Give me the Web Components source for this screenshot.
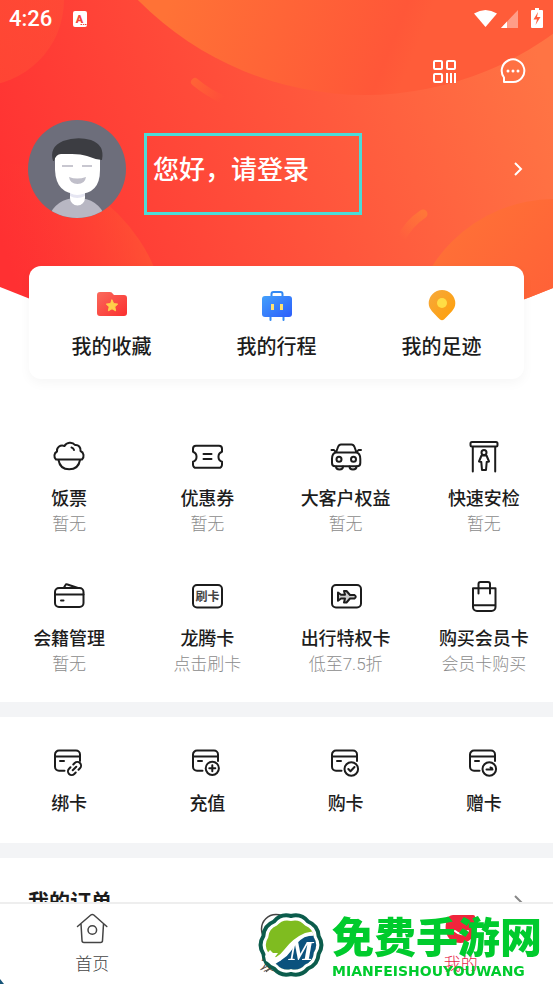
<!DOCTYPE html>
<html lang="zh-CN">
<head>
<meta charset="utf-8">
<meta name="viewport" content="width=device-width, initial-scale=1">
<title>我的</title>
<style>
    body {
        margin: 0;
        background: #fff;
        color: #1c1c1c;
        font-family: Roboto, "Noto Sans CJK SC", sans-serif;
    }
</style>
</head>
<body>
<app-shell>
    <profile-hero>
        <status-bar slot="status" time="4:26"></status-bar>
        <quick-card>
            <menu-item size="large" icon="folder" label="我的收藏"></menu-item>
            <menu-item size="large" icon="suitcase" label="我的行程"></menu-item>
            <menu-item size="large" icon="pin" label="我的足迹"></menu-item>
        </quick-card>
    </profile-hero>
    <menu-grid>
        <menu-item icon="rice" label="饭票" note="暂无"></menu-item>
        <menu-item icon="ticket" label="优惠券" note="暂无"></menu-item>
        <menu-item icon="car" label="大客户权益" note="暂无"></menu-item>
        <menu-item icon="gate" label="快速安检" note="暂无"></menu-item>
        <menu-item icon="wallet" label="会籍管理" note="暂无"></menu-item>
        <menu-item icon="swipe" label="龙腾卡" note="点击刷卡"></menu-item>
        <menu-item icon="plane" label="出行特权卡" note="低至7.5折"></menu-item>
        <menu-item icon="bag" label="购买会员卡" note="会员卡购买"></menu-item>
    </menu-grid>
    <menu-grid compact>
        <menu-item icon="card-link" label="绑卡"></menu-item>
        <menu-item icon="card-plus" label="充值"></menu-item>
        <menu-item icon="card-check" label="购卡"></menu-item>
        <menu-item icon="card-gift" label="赠卡"></menu-item>
    </menu-grid>
    <order-header>我的订单</order-header>
    <tab-bar slot="tabs">
        <tab-item icon="home" label="首页"></tab-item>
        <tab-item icon="discover" label="发现"></tab-item>
        <tab-item icon="mine" label="我的" active></tab-item>
    </tab-bar>
    <site-mark slot="mark"></site-mark>
</app-shell>

<script>
// All icons share a 36x36 canvas
const CARD = `
    <path d="M13.5 26.8H8a4 4 0 0 1-4-4V10.5a4 4 0 0 1 4-4h17a4 4 0 0 1 4 4V17M4 12.5h25"/>
    <path d="M9 17h4"/>`;

const ICONS = {
    folder: `
        <defs><linearGradient id="g" x1="0" y1="0" x2="1" y2="1">
            <stop offset="0" stop-color="#fa6a5c"/><stop offset="1" stop-color="#fb2f2f"/>
        </linearGradient></defs>
        <path fill="url(#g)" stroke="none" d="M3 8a3 3 0 0 1 3-3h10q2 0 3 2l1 1h10a3 3 0 0 1 3 3v15a3 3 0 0 1-3 3H6a3 3 0 0 1-3-3z"/>
        <path fill="#ffd149" stroke="#ffd149" stroke-width="1" d="m18 13 1.7 3.6 4 .5-2.900 2.700.8 4-3.600-2-3.600 2 .8-4-2.900-2.700 4-.5z"/>`,
    suitcase: `
        <defs><linearGradient id="g" x1="0" y1="0" x2="1" y2="1">
            <stop offset="0" stop-color="#43a0fb"/><stop offset="1" stop-color="#2c5dfb"/>
        </linearGradient></defs>
        <path stroke="#3389f2" stroke-width="2" d="M12.500 10V7a2 2 0 0 1 2-2h7a2 2 0 0 1 2 2v3M11.500 28v5M24.500 28v5"/>
        <rect x="3" y="9" width="30" height="21" rx="3" fill="url(#g)" stroke="none"/>
        <path stroke="#ffe070" stroke-width="3" stroke-linecap="butt" d="M13.500 17v6M22.500 17v6"/>`,
    pin: `
        <defs><linearGradient id="g" x1="0" y1="0" x2="1" y2="1">
            <stop offset="0" stop-color="#f6a93c"/><stop offset="1" stop-color="#ff9f08"/>
        </linearGradient></defs>
        <path fill="url(#g)" stroke="none" d="M18 3a13.300 13.300 0 0 1 13.300 13.300c0 6-5 9.700-11.300 16.200q-2 1.500-4 0C9.700 26 4.700 22.300 4.700 16.300A13.300 13.300 0 0 1 18 3z"/>
        <circle cx="18" cy="16" r="5" fill="#ffdd45" stroke="none"/>`,
    rice: `
        <path d="M5 20.500C2.500 18 3 14 6 12.500 5.500 8 9.500 5.500 13.500 7c2-4 8-4.500 10.500-1 3.500-.5 6 2.500 5.500 6 3.500 1.500 4 6 1.500 8.500z"/>
        <path d="M7.500 21c1 6 5 9.300 10.700 9.300S28 27 29 21M20.500 8.500q2 .5 2.500 2.500"/>`,
    ticket: `
        <path d="M7 6.800h23a3 3 0 0 1 3 3v3a5.300 5.300 0 0 0 0 10v3a3 3 0 0 1-3 3H7a3 3 0 0 1-3-3v-3a5.300 5.300 0 0 0 0-10v-3a3 3 0 0 1 3-3z"/>
        <path d="M14.500 15h8M14.500 20h8"/>`,
    car: `
        <path d="M8 13.500 10 8q1-2.500 3-2.500h10.500q2 0 3 2.500l2 5.500M3.500 11H6l2 2.500h20.500l2-2.500H33M8 13.500C5 14 4 17 4 20v4q0 3.300 3.300 3.300H29q3.300 0 3.300-3.300v-4c0-3-1-6-4-6.500"/>
        <circle cx="11" cy="20.300" r="2.500"/><circle cx="25.500" cy="20.300" r="2.500"/>
        <path d="M8 27.500c0 4 7 4 7 0M21.500 27.500c0 4 7 4 7 0"/>`,
    gate: `
        <rect x="4.500" y="3" width="27" height="4.500" rx="1.500"/>
        <path d="M6.800 8v24.500M29.200 8v24.500"/>
        <circle cx="18" cy="13.500" r="2.500"/>
        <path d="M15.500 16.500h5l2.500 6-2.300.5-.7 8h-4l-.7-8-2.300-.5z"/>`,
    wallet: `
        <rect x="4" y="9" width="28.500" height="19" rx="4"/>
        <path d="M4 15.500h28.500M10 21.500h2.500M13 8.500l1.500-2.500q.5-1 2-.5L27 9"/>`,
    swipe: `
        <rect x="4" y="6" width="29" height="22.500" rx="4"/>
        <text x="18.500" y="22" text-anchor="middle" font-size="12" font-weight="700" fill="#444" stroke="none">刷卡</text>`,
    plane: `
        <rect x="4" y="6" width="29" height="22.500" rx="4"/>
        <path fill="#ccc" d="m10 13.500 3 2.300h4L16 12h2.500l3.500 4h4.500q2.500 1.500 0 3.500H22l-3.500 4H16l1-4h-4L10 21.800z"/>`,
    bag: `
        <path d="M7 9.300h22.500V28a4 4 0 0 1-4 4H11a4 4 0 0 1-4-4zM7 26.300h22.500M12.500 14.500V5a2 2 0 0 1 2-2h7.500a2 2 0 0 1 2 2v9.500"/>`,
    'card-link': CARD + `
        <g transform="rotate(-45 23.500 24.500)"><path d="M21.500 20.800h-2a3.700 3.700 0 0 0 0 7.400h2M25.500 20.800h2a3.700 3.700 0 0 1 0 7.400h-2M21 24.500h5"/></g>`,
    'card-plus': CARD + `<circle cx="23.300" cy="24.300" r="6.600"/><path d="M20.300 24.300h6M23.300 21.300v6"/>`,
    'card-check': CARD + `<circle cx="23.300" cy="25" r="6.800"/><path d="m20.300 25 2.200 2.300 4-4.300"/>`,
    'card-gift': CARD + `<circle cx="23.300" cy="25" r="6.800"/><path d="M20.500 25.500h6q0-1.500-2-2"/>`,
    home: `
        <path d="M3.500 15.500 16.800 4q1.500-1.200 3 0L32.800 15.500M7 13l1 16.500q0 2 2 2h16.500q2 0 2-2l1-16.500"/>
        <circle cx="18.300" cy="19" r="4.300"/>`,
    discover: `<circle cx="18" cy="18" r="14.500"/><path d="m23.500 12.500-3.500 8-8 3.500 3.500-8z"/>`,
    mine: `
        <path fill="#f0253c" stroke="none" d="M10 4h20q2.500 0 2 3c2 12-.5 25-14.500 25S1 19 3.500 10Q5 4 10 4z"/>
        <path stroke="#fff" d="M12 20q7 6.500 13 0"/>`
};

class AppIcon extends HTMLElement {
    constructor() {
        super();
        this.attachShadow({ mode: 'open' });
    }
    connectedCallback() {
        this.shadowRoot.innerHTML = `
            <style>
                :host { display: block; width: 36px; height: 36px; }
                svg {
                    display: block;
                    fill: none;
                    stroke: currentColor;
                    stroke-width: var(--icon-stroke, 2);
                    stroke-linecap: round;
                    stroke-linejoin: round;
                }
            </style>
            <svg width="36" height="36" viewBox="0 0 36 36" aria-hidden="true">${ICONS[this.getAttribute('name')] || ''}</svg>
        `;
    }
}

class AppShell extends HTMLElement {
    constructor() {
        super();
        this.attachShadow({ mode: 'open' }).innerHTML = `
            <style>
                :host { display: flex; flex-direction: column; height: 100vh; overflow: hidden; }
                main { flex: 1; min-height: 0; overflow-y: auto; scrollbar-width: none; }
            </style>
            <main><slot></slot></main>
            <slot name="tabs"></slot>
            <slot name="mark"></slot>
        `;
    }
}

class StatusBar extends HTMLElement {
    constructor() {
        super();
        this.attachShadow({ mode: 'open' });
    }
    connectedCallback() {
        this.shadowRoot.innerHTML = `
            <style>
                :host {
                    display: flex;
                    align-items: center;
                    height: 38px;
                    padding: 0 9px;
                    color: #fff;
                }
                time { font-size: 22px; font-weight: 500; line-height: 38px; margin-right: 20px; }
                .signals { margin-left: auto; }
                svg { display: block; }
            </style>
            <time>${this.getAttribute('time')}</time>
            <svg width="16" height="16" viewBox="0 0 16 16" aria-hidden="true">
                <rect x="1" width="14" height="16" rx="2" fill="#fff"/>
                <text x="7.500" y="12" text-anchor="middle" font-size="11" font-weight="900" fill="#f5483b">A</text>
                <path d="M8.500 13.500h1.500M10.800 13.500h1.500M13 13.500h1.500" stroke="#f5483b"/>
            </svg>
            <svg class="signals" width="72" height="22" viewBox="0 0 72 22" fill="#fff" aria-hidden="true">
                <path d="M2 5.500q11.500-7 23 0L13.500 19z"/>
                <path d="M46 2v18H29z" opacity=".4"/>
                <path d="M35 13.500V20h-6z"/>
                <path d="M60 2h3V0h4v2h3q1 0 1 1v16q0 1-1 1H60q-1 0-1-1V3q0-1 1-1z"/>
                <path d="m66 4-4.500 7.500H65L63.500 17l5-8H65z" fill="#ff5f3d"/>
            </svg>
        `;
    }
}

class ProfileHero extends HTMLElement {
    constructor() {
        super();
        this.attachShadow({ mode: 'open' }).innerHTML = `
            <style>
                :host { display: block; position: relative; isolation: isolate; color: #fff; }
                .backdrop { position: absolute; inset: 0 0 auto; width: 100%; height: 346px; z-index: -1; }
                .tools { display: flex; justify-content: flex-end; align-items: center; gap: 32px; height: 66px; padding: 0 22px; }
                button { padding: 0; border: 0; background: none; color: inherit; font: inherit; cursor: pointer; }
                svg { display: block; }
                .profile {
                    display: flex;
                    align-items: center;
                    gap: 18px;
                    margin: 16px 28px 48px;
                    color: inherit;
                    text-decoration: none;
                }
                .greeting {
                    position: relative;
                    flex: 1;
                    padding: 2px 0 0 9px;
                    font-size: 26px;
                    font-weight: 500;
                    line-height: 40px;
                }
                /* highlight frame floating over the greeting */
                .frame {
                    position: absolute;
                    left: 0;
                    top: -15px;
                    width: 212px;
                    height: 76px;
                    border: 3px solid #4bdcd8;
                }
            </style>
            <svg class="backdrop" viewBox="0 0 553 346" preserveAspectRatio="none" aria-hidden="true">
                <defs>
                    <clipPath id="shape"><path d="M0 0H553V288Q276 403 0 287z"/></clipPath>
                    <linearGradient id="base" gradientUnits="userSpaceOnUse" x1="0" y1="240" x2="540" y2="60">
                        <stop offset="0" stop-color="#ff3032"/>
                        <stop offset=".45" stop-color="#ff4e3a"/>
                        <stop offset="1" stop-color="#ff7444"/>
                    </linearGradient>
                    <linearGradient id="top" gradientUnits="userSpaceOnUse" x1="170" y1="0" x2="400" y2="90">
                        <stop offset="0" stop-color="#ff7236"/>
                        <stop offset=".9" stop-color="#ff5738"/>
                        <stop offset="1" stop-color="#ff5c39"/>
                    </linearGradient>
                    <linearGradient id="left" gradientUnits="userSpaceOnUse" x1="145" y1="230" x2="10" y2="265">
                        <stop offset="0" stop-color="#ff6032" stop-opacity=".5"/>
                        <stop offset="1" stop-color="#ff3030" stop-opacity="0"/>
                    </linearGradient>
                    <linearGradient id="right" x1="0" y1="0" x2="1" y2="1">
                        <stop offset="0" stop-color="#ff7636"/>
                        <stop offset=".6" stop-color="#ff5838"/>
                    </linearGradient>
                    <linearGradient id="corner" gradientUnits="userSpaceOnUse" x1="60" y1="30" x2="0" y2="10">
                        <stop offset="0" stop-color="#ff5c34" stop-opacity=".3"/>
                        <stop offset="1" stop-color="#ff5634" stop-opacity=".5"/>
                    </linearGradient>
                    <linearGradient id="dashA" gradientUnits="userSpaceOnUse" x1="194" y1="82" x2="222" y2="100">
                        <stop offset="0" stop-color="#ff6236"/><stop offset="1" stop-color="#ff6236" stop-opacity="0"/>
                    </linearGradient>
                    <linearGradient id="dashB" gradientUnits="userSpaceOnUse" x1="424" y1="213" x2="402" y2="238">
                        <stop offset="0" stop-color="#ff7638"/><stop offset="1" stop-color="#ff7638" stop-opacity="0"/>
                    </linearGradient>
                </defs>
                <g clip-path="url(#shape)">
                    <rect width="553" height="346" fill="url(#base)"/>
                    <circle cx="-22" cy="0" r="86" fill="url(#corner)"/>
                    <circle cx="365" cy="-224" r="319" fill="url(#top)"/>
                    <circle cx="-4" cy="335" r="172" fill="url(#left)"/>
                    <circle cx="555" cy="345" r="146" fill="url(#right)"/>
                    <path d="M195 82q13 11 29 18" fill="none" stroke="url(#dashA)" stroke-width="8" stroke-linecap="round"/>
                    <path d="M423 214q-14 9-22 25" fill="none" stroke="url(#dashB)" stroke-width="9" stroke-linecap="round"/>
                </g>
            </svg>
            <slot name="status"></slot>
            <div class="tools">
                <button aria-label="二维码">
                    <svg width="36" height="36" viewBox="0 0 36 36" fill="none" stroke="#fff" stroke-width="2">
                        <rect x="7" y="8" width="8" height="8" rx="1"/>
                        <rect x="20" y="8" width="8" height="8" rx="1"/>
                        <rect x="7" y="21" width="8" height="8" rx="1"/>
                        <path d="M20 20v10M24 20v10M28 20v10"/>
                    </svg>
                </button>
                <button aria-label="消息">
                    <svg width="36" height="36" viewBox="0 0 36 36" fill="none" stroke="#fff" stroke-width="2">
                        <path d="M9 29v-4.500A11.300 11.300 0 1 1 18.300 29z" stroke-linejoin="round"/>
                        <g fill="#fff" stroke="none"><circle cx="13" cy="18" r="1.500"/><circle cx="18" cy="18" r="1.500"/><circle cx="23" cy="18" r="1.500"/></g>
                    </svg>
                </button>
            </div>
            <a class="profile" href="#login">
                <svg width="98" height="98" viewBox="0 0 98 98" role="img" aria-label="头像">
                    <clipPath id="round"><circle cx="49" cy="49" r="49"/></clipPath>
                    <g clip-path="url(#round)">
                        <rect width="98" height="98" fill="#6d6e7b"/>
                        <path d="M20 98q8-20 29-20t29 20z" fill="#b8b7c3"/>
                        <path d="M42 70h15v8a7.500 7.500 0 0 1-15 0z" fill="#fff"/>
                        <path d="M42 73q7 4 15 0v3q-8 4-15 0z" fill="#e6e6f2"/>
                        <path d="M27 34q22-12 45 0v16q0 24-22 24T27 50z" fill="#fff"/>
                        <path d="M25 41q-4-14 10-20 14-5 28-1 14 5 11 20-8-1-15-4-6-2-15-2H33q-5 0-7 7z" fill="#3c3d42"/>
                        <path d="M34 46h11M54 46h10" stroke="#c8c7d0" stroke-width="2"/>
                        <path d="M41 57q8 3 17 0-1 7-8.500 7T41 57z" fill="#c0bfca"/>
                    </g>
                </svg>
                <span class="greeting">您好，请登录<span class="frame"></span></span>
                <svg width="14" height="16" viewBox="0 0 14 16" fill="none" stroke="#fff" stroke-width="2" aria-hidden="true">
                    <path d="m4 2 6 6-6 6"/>
                </svg>
            </a>
            <slot></slot>
        `;
    }
}

class QuickCard extends HTMLElement {
    constructor() {
        super();
        this.attachShadow({ mode: 'open' }).innerHTML = `
            <style>
                :host {
                    display: grid;
                    grid-template-columns: repeat(3, 1fr);
                    margin: 0 29px;
                    padding: 21px 0 19px;
                    border-radius: 12px;
                    background: #fff;
                    color: #1c1c1c;
                    box-shadow: 0 4px 12px rgba(0, 0, 0, 0.04);
                }
            </style>
            <slot></slot>
        `;
    }
}

class MenuGrid extends HTMLElement {
    constructor() {
        super();
        this.attachShadow({ mode: 'open' }).innerHTML = `
            <style>
                :host {
                    display: grid;
                    grid-template-columns: repeat(4, 1fr);
                    row-gap: 43px;
                    padding: 60px 0 26px;
                    border-bottom: 15px solid #f3f4f6;
                }
                :host([compact]) { padding: 27px 0 26px; }
            </style>
            <slot></slot>
        `;
    }
}

class MenuItem extends HTMLElement {
    constructor() {
        super();
        this.attachShadow({ mode: 'open' });
    }
    connectedCallback() {
        const note = this.getAttribute('note');
        this.shadowRoot.innerHTML = `
            <style>
                :host { display: block; }
                a {
                    display: flex;
                    flex-direction: column;
                    align-items: center;
                    color: inherit;
                    text-decoration: none;
                    white-space: nowrap;
                }
                .label { margin-top: 11px; font-size: 18px; font-weight: 500; line-height: 26px; }
                :host([size="large"]) .label { font-size: 20px; }
                .note { color: #8c8c8c; font-size: 17px; font-weight: 300; line-height: 24px; }
            </style>
            <a href="#${this.getAttribute('icon')}">
                <app-icon name="${this.getAttribute('icon')}"></app-icon>
                <span class="label">${this.getAttribute('label')}</span>
                ${note ? `<span class="note">${note}</span>` : ''}
            </a>
        `;
    }
}

class OrderHeader extends HTMLElement {
    constructor() {
        super();
        this.attachShadow({ mode: 'open' }).innerHTML = `
            <style>
                :host { display: block; padding: 20px 28px; }
                a { display: flex; align-items: center; justify-content: space-between; color: inherit; text-decoration: none; }
                h2 { margin: 0; font-size: 21px; font-weight: 700; line-height: 48px; }
            </style>
            <a href="#orders">
                <h2><slot></slot></h2>
                <svg width="14" height="16" viewBox="0 0 14 16" fill="none" stroke="#888" stroke-width="2" aria-hidden="true">
                    <path d="m4 2 6 6-6 6"/>
                </svg>
            </a>
        `;
    }
}

class TabBar extends HTMLElement {
    constructor() {
        super();
        this.attachShadow({ mode: 'open' }).innerHTML = `
            <style>
                :host { display: block; border-top: 2px solid #eee; background: #fff; }
                nav { display: grid; grid-template-columns: repeat(3, 1fr); padding: 7px 0 8px; }
            </style>
            <nav><slot></slot></nav>
        `;
    }
}

class TabItem extends HTMLElement {
    constructor() {
        super();
        this.attachShadow({ mode: 'open' });
    }
    connectedCallback() {
        this.shadowRoot.innerHTML = `
            <style>
                :host { display: block; color: #444; --icon-stroke: 1.5; }
                :host([active]) { color: #e5264a; --icon-stroke: 2; }
                a { display: flex; flex-direction: column; align-items: center; gap: 5px; color: inherit; text-decoration: none; }
                span { font-size: 17px; line-height: 24px; font-weight: 300; }
            </style>
            <a href="#${this.getAttribute('icon')}">
                <app-icon name="${this.getAttribute('icon')}"></app-icon>
                <span>${this.getAttribute('label')}</span>
            </a>
        `;
    }
}

// Closed badge outline with evenly spaced lobes around (33, 33)
function badgePath(radius, lobes) {
    const point = (r, i) => {
        const angle = (i / lobes) * 2 * Math.PI;
        return `${(33 + r * Math.sin(angle)).toFixed(1)} ${(33 - r * Math.cos(angle)).toFixed(1)}`;
    };
    let d = `M${point(radius, 0)}`;
    for (let i = 0; i < lobes; i++) {
        d += `Q${point(radius * 1.15, i + 0.5)} ${point(radius, i + 1)}`;
    }
    return d + 'z';
}

// Site stamp laid over the tab bar, with its small mark in the corner
class SiteMark extends HTMLElement {
    constructor() {
        super();
        this.attachShadow({ mode: 'open' }).innerHTML = `
            <style>
                :host {
                    position: fixed;
                    right: 11px;
                    bottom: 3px;
                    display: flex;
                    align-items: center;
                    gap: 8px;
                    color: #00cb2d;
                    pointer-events: none;
                }
                svg { display: block; }
                .text { padding-top: 8px; }
                .name { font-size: 42px; font-weight: 900; line-height: 44px; }
                .latin { font: bold 14px/20px "DejaVu Sans", sans-serif; }
                .corner { position: fixed; left: 0; bottom: 0; }
            </style>
            <svg width="66" height="66" viewBox="0 0 66 66" aria-hidden="true">
                <path d="${badgePath(29, 10)}" fill="#fff" stroke="#0b5c4c" stroke-width="4" stroke-linejoin="round"/>
                <clipPath id="disc"><path d="${badgePath(24, 10)}"/></clipPath>
                <g clip-path="url(#disc)">
                    <rect width="66" height="66" fill="#7fbc20"/>
                    <path d="M0 50q18-1 26-12 9-12 21-17l19-4v50H0z" fill="#fff"/>
                    <path d="M8 53q17-2 25-14 9-14 18-15l15-1v44H8z" fill="#0b527d"/>
                </g>
                <text x="43" y="48" text-anchor="middle" font-family="Liberation Serif, serif" font-size="28" font-style="italic" font-weight="700" fill="#fff">M</text>
                <path d="m7 44 5-6 3 3h5l-3 4 6 3-7 5-8-4z" fill="#fff"/>
                <path d="m4 57 6-3M8 60l5-4" stroke="#543" fill="none"/>
            </svg>
            <div class="text">
                <div class="name">免费手游网</div>
                <div class="latin">MIANFEISHOUYOUWANG</div>
            </div>
            <svg class="corner" width="5" height="5" viewBox="0 0 5 5" aria-hidden="true">
                <path d="M0 0 4 5H0z" fill="#175478"/>
            </svg>
        `;
    }
}

customElements.define('app-icon', AppIcon);
customElements.define('app-shell', AppShell);
customElements.define('status-bar', StatusBar);
customElements.define('profile-hero', ProfileHero);
customElements.define('quick-card', QuickCard);
customElements.define('menu-grid', MenuGrid);
customElements.define('menu-item', MenuItem);
customElements.define('order-header', OrderHeader);
customElements.define('tab-bar', TabBar);
customElements.define('tab-item', TabItem);
customElements.define('site-mark', SiteMark);
</script>
</body>
</html>
